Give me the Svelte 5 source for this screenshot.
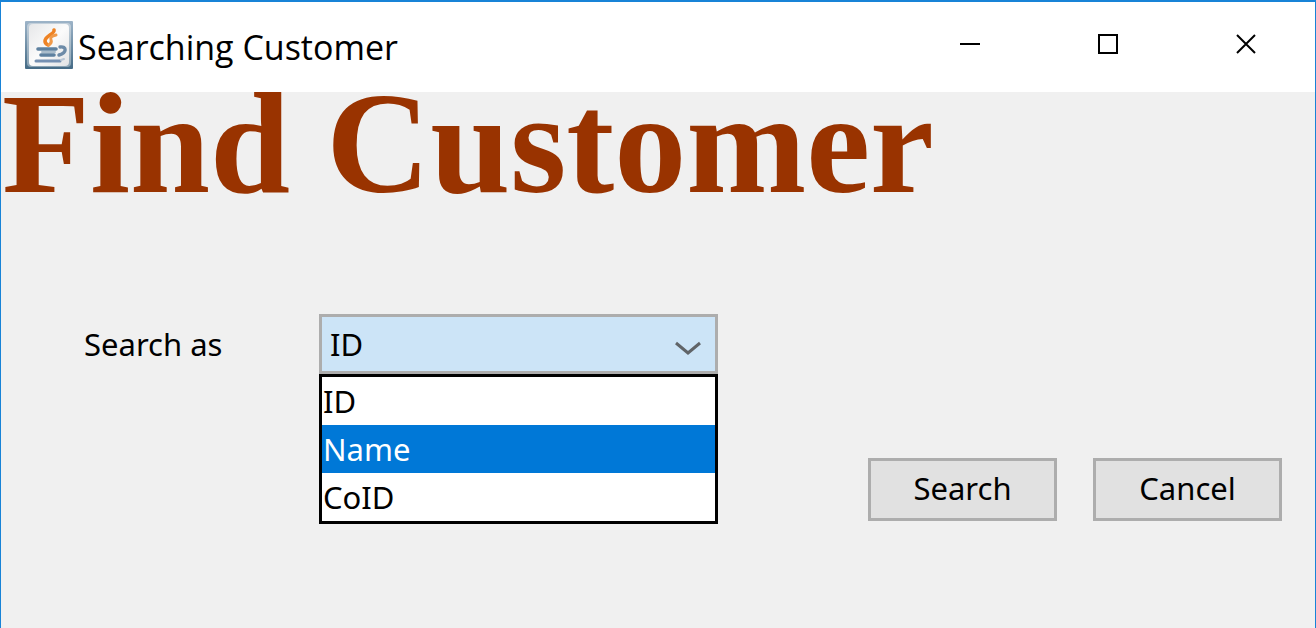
<script>
  const options = ['ID', 'Name', 'CoID'];
  let selected = $state('ID');
  let highlighted = $state('Name');
  let open = $state(true);

  function choose(option) {
    selected = option;
    highlighted = option;
    open = false;
  }

  function toggle(event) {
    event.preventDefault();
    open = !open;
  }
</script>

<div class="window">
  <header class="titlebar">
    <svg class="app-icon" viewBox="0 0 48 48" aria-hidden="true">
      <defs>
        <linearGradient id="frame" x1="0" y1="0" x2="0" y2="1">
          <stop offset="0" stop-color="#9db4c8" />
          <stop offset="1" stop-color="#456b86" />
        </linearGradient>
        <linearGradient id="edge" x1="0" y1="0" x2="0" y2="1">
          <stop offset="0" stop-color="#c3d0db" />
          <stop offset="1" stop-color="#8aa3b4" />
        </linearGradient>
        <linearGradient id="face" x1="0" y1="0" x2="1" y2="1">
          <stop offset="0" stop-color="#e6e7e9" />
          <stop offset="0.5" stop-color="#fbfbfb" />
          <stop offset="1" stop-color="#e2e3e5" />
        </linearGradient>
      </defs>
      <rect width="48" height="48" rx="1" fill="url(#frame)" />
      <rect x="2" y="2" width="44" height="44" rx="4" fill="url(#edge)" />
      <rect x="4" y="3" width="40" height="42" rx="4" fill="url(#face)" />
      <g fill="none" stroke-linecap="round">
        <path d="M29 9c1 4-9 6-9 11 0 2 1 3 3 4" stroke="#ee8325" stroke-width="3.6" />
        <path d="M31 14c-5 1-6 3-5 5 1 2 0 3-2 5" stroke="#f09a4a" stroke-width="3" />
        <path d="M13 28h18M16 34h13" stroke="#5e81a0" stroke-width="3.6" />
        <path d="M35 26c7-1 7 6-1 8" stroke="#6d8ba8" stroke-width="3.4" />
        <path d="M17 31h13" stroke="#a9bccb" stroke-width="2" />
        <path d="M11 40h24" stroke="#7590b2" stroke-width="3" />
        <path d="M36 39l3-1" stroke="#b9c6d5" stroke-width="2" />
      </g>
    </svg>
    <span class="title">Searching Customer</span>
    <div class="controls">
      <button type="button" aria-label="Minimize">
        <svg viewBox="0 0 20 20" aria-hidden="true"><path d="M0 10h20" /></svg>
      </button>
      <button type="button" aria-label="Maximize">
        <svg viewBox="0 0 20 20" aria-hidden="true"><path d="M1 1h18v18H1z" /></svg>
      </button>
      <button type="button" aria-label="Close">
        <svg viewBox="0 0 20 20" aria-hidden="true"><path d="M1 1l18 18M19 1L1 19" /></svg>
      </button>
    </div>
  </header>

  <main>
    <h1>Find Customer</h1>
    <form onsubmit={(event) => event.preventDefault()}>
      <label for="search-as">Search as</label>
      <div class="combo">
        <select id="search-as" bind:value={selected} onmousedown={toggle}>
          {#each options as option}
            <option value={option}>{option}</option>
          {/each}
        </select>
        <svg class="chevron" viewBox="0 0 30 18" aria-hidden="true">
          <path d="M3 3l12 10L27 3" />
        </svg>
        {#if open}
          <div class="popup" role="listbox" aria-label="Search as">
            {#each options as option}
              <button
                type="button"
                role="option"
                aria-selected={option === highlighted}
                class:highlighted={option === highlighted}
                onmouseenter={() => (highlighted = option)}
                onclick={() => choose(option)}>{option}</button>
            {/each}
          </div>
        {/if}
      </div>
      <div class="actions">
        <button type="submit">Search</button>
        <button type="button">Cancel</button>
      </div>
    </form>
  </main>
</div>

<style>
  :global(body) {
    margin: 0;
    background: #f0f0f0;
  }

  .window {
    box-sizing: border-box;
    min-height: 100vh;
    border: 1px solid #1883d7;
    border-top-width: 2px;
    border-bottom: 0;
    background: #f0f0f0;
    color: #000;
    font-family: "Noto Sans", "Open Sans", sans-serif;
    font-size: 31px;
  }

  .titlebar {
    display: flex;
    align-items: center;
    height: 90px;
    padding-left: 24px;
    background: #fff;
  }

  .app-icon {
    flex: none;
    width: 48px;
    height: 48px;
    margin-bottom: 4px;
  }

  .title {
    flex: 1;
    padding-left: 5px;
    font-family: "Open Sans", "Noto Sans", sans-serif;
    font-size: 34px;
    line-height: 48px;
    white-space: nowrap;
  }

  .controls {
    display: flex;
    align-self: flex-start;
  }

  .controls button {
    display: flex;
    align-items: center;
    justify-content: center;
    width: 138px;
    height: 84px;
    padding: 0;
    border: 0;
    background: none;
  }

  .controls svg {
    width: 20px;
    height: 20px;
    fill: none;
    stroke: #000;
    stroke-width: 2;
  }

  h1 {
    margin: 0;
    padding-left: 1px;
    color: #993300;
    font-family: "Liberation Serif", "Times New Roman", serif;
    font-size: 144px;
    font-weight: 700;
    line-height: 104px;
    white-space: nowrap;
  }

  form {
    display: grid;
    grid-template-columns: 235px minmax(0, 399px) 1fr;
    padding: 118px 33px 0 83px;
  }

  label {
    line-height: 60px;
    white-space: nowrap;
  }

  .combo {
    position: relative;
    height: 60px;
  }

  select {
    box-sizing: border-box;
    width: 100%;
    height: 60px;
    padding: 0 8px;
    border: 3px solid #adadad;
    border-radius: 0;
    outline: 0;
    appearance: none;
    background: #cce4f7;
    color: #000;
    font: inherit;
  }

  .chevron {
    position: absolute;
    top: 26px;
    right: 15px;
    width: 30px;
    height: 18px;
    fill: none;
    stroke: #606468;
    stroke-width: 3;
    pointer-events: none;
  }

  .popup {
    position: absolute;
    top: 100%;
    left: 0;
    right: 0;
    border: 3px solid #000;
    background: #fff;
  }

  .popup button {
    display: block;
    width: 100%;
    height: 48px;
    padding: 0 1px;
    border: 0;
    background: none;
    color: #000;
    font: inherit;
    line-height: 48px;
    text-align: left;
  }

  .popup button.highlighted {
    background: #0078d7;
    color: #fff;
  }

  .actions {
    display: flex;
    justify-content: flex-end;
    gap: 36px;
    padding-top: 144px;
  }

  .actions button {
    box-sizing: border-box;
    width: 189px;
    height: 63px;
    padding: 0 0 4px;
    border: 3px solid #adadad;
    background: #e1e1e1;
    color: #000;
    font: inherit;
  }
</style>
